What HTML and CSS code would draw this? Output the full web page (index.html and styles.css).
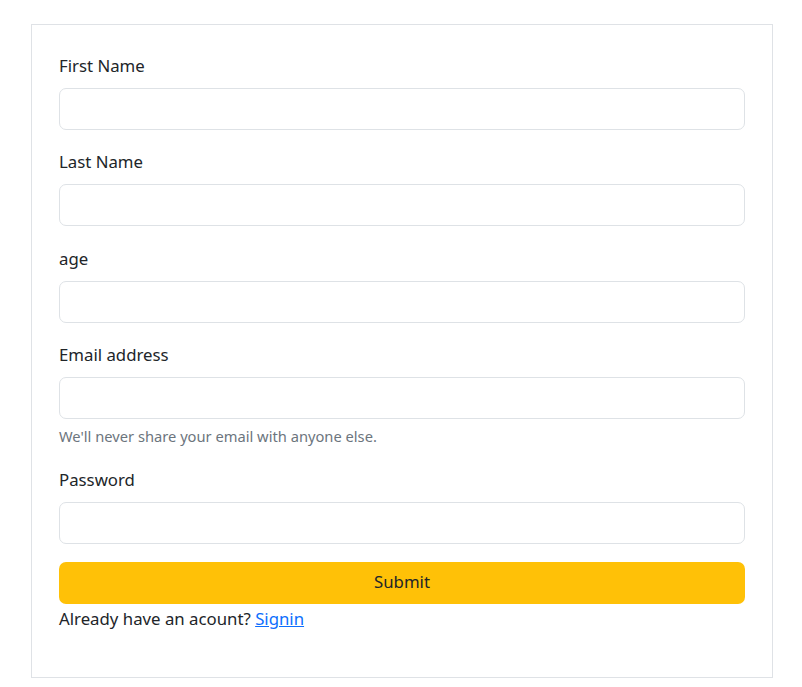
FILE: index.html
```html
<!DOCTYPE html>
<html lang="en">
<head>
<meta charset="utf-8">
<title>Sign up</title>
<link rel="stylesheet" href="styles.css">
</head>
<body>
<div class="card">
  <form class="form">
    <div class="field">
      <label class="label" for="fn">First Name</label>
      <input class="input" id="fn" type="text">
    </div>
    <div class="field">
      <label class="label" for="ln">Last Name</label>
      <input class="input" id="ln" type="text">
    </div>
    <div class="field">
      <label class="label" for="age">age</label>
      <input class="input" id="age" type="text">
    </div>
    <div class="field">
      <label class="label" for="em">Email address</label>
      <input class="input" id="em" type="email">
      <div class="help">We'll never share your email with anyone else.</div>
    </div>
    <div class="field">
      <label class="label" for="pw">Password</label>
      <input class="input" id="pw" type="password">
    </div>
    <button class="submit" type="button">Submit</button>
    <p class="signin">Already have an acount? <a href="#" class="link">Signin</a></p>
  </form>
</div>
</body>
</html>
```
FILE: styles.css
```css
* { box-sizing: border-box; }
html, body { margin: 0; padding: 0; background: #fff; }
body {
  font-family: "Noto Sans", "Open Sans", sans-serif;
  font-size: 16.8px;
  color: #212529;
  line-height: 1.6;
}
.card {
  width: 742px;
  margin: 24px 0 0 31px;
  border: 1px solid #dfe2e6;
  padding: 28px 27px 29px;
}
.form { display: flex; flex-direction: column; }
.field { display: flex; flex-direction: column; margin-bottom: 19.3px; }
.label { display: block; height: 27px; margin-bottom: 8px; }
.input {
  display: block;
  width: 100%;
  height: 42px;
  border: 1px solid #dee2e6;
  border-radius: 7px;
  font: inherit;
  padding: 0 12px;
  background: #fff;
}
.help {
  margin-top: 4.8px;
  font-size: 14.7px;
  color: #6c757d;
  line-height: 24px;
}
.submit {
  display: block;
  width: 100%;
  height: 42px;
  border: none;
  border-radius: 7px;
  background: #ffc107;
  color: #212529;
  font: inherit;
  margin-top: -1.5px;
  cursor: pointer;
}
.signin { margin: 1.5px 0 16px; line-height: 27px; }
.link { color: #0d6efd; text-decoration: underline; }
```
